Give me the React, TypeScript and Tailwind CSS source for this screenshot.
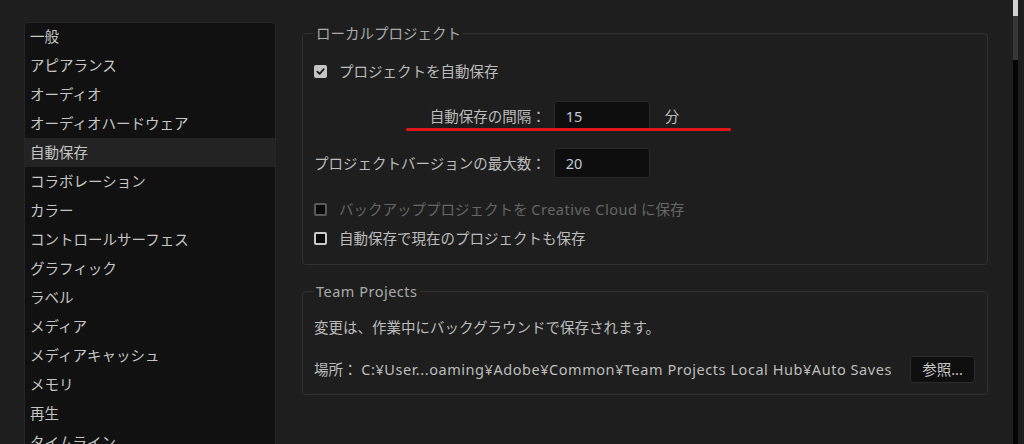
import React from "react";

const items = [
  "一般",
  "アピアランス",
  "オーディオ",
  "オーディオハードウェア",
  "自動保存",
  "コラボレーション",
  "カラー",
  "コントロールサーフェス",
  "グラフィック",
  "ラベル",
  "メディア",
  "メディアキャッシュ",
  "メモリ",
  "再生",
  "タイムライン",
];

function CheckBox({ checked, disabled }: { checked?: boolean; disabled?: boolean }) {
  if (checked) {
    return (
      <span className="w-[13px] h-[13px] rounded-[2px] bg-[#c4c4c4] flex items-center justify-center shrink-0">
        <svg width="9" height="9" viewBox="0 0 10 10">
          <path d="M1.5 5.2 L4 7.6 L8.6 2.4" fill="none" stroke="#161616" strokeWidth="1.9" strokeLinecap="round" strokeLinejoin="round" />
        </svg>
      </span>
    );
  }
  return (
    <span
      className={
        disabled
          ? "w-[13px] h-[13px] rounded-[2px] border-2 border-[#5a5a5a] bg-[#0a0a0a] shrink-0"
          : "w-[13px] h-[13px] rounded-[2px] border-2 border-[#cacaca] bg-[#0a0a0a] shrink-0"
      }
    />
  );
}

export default function App() {
  return (
    <div
      className="relative w-[1024px] h-[444px] overflow-hidden bg-[#1e1e1e] flex items-start text-[14.5px] text-[#bdbdbd]"
      style={{ fontFamily: '"Noto Sans", "Noto Sans CJK JP", sans-serif' }}
    >
      {/* left list */}
      <div className="ml-[24px] mt-[22px] w-[252px] h-[460px] bg-[#111111] border border-[#262626] rounded-[4px] shrink-0 overflow-hidden">
        <div className="-mt-px">
          {items.map((it) => (
            <div
              key={it}
              className={
                "h-[29px] flex items-center pl-[5px] leading-none text-[#c6c6c6] " +
                (it === "自動保存" ? "bg-[#232323]" : "")
              }
            >
              {it}
            </div>
          ))}
        </div>
      </div>

      {/* right column */}
      <div className="ml-[26px] w-[686px] shrink-0 pt-[25px] flex flex-col">
        <fieldset className="border border-[#303030] rounded-[4px] pl-[11px] pr-[12px] pb-[15px]">
          <legend className="px-[2px] leading-[16px] text-[#ababab]">ローカルプロジェクト</legend>
          <div className="pt-[19px] flex flex-col">
            <div className="h-[22px] flex items-center gap-[12px]">
              <CheckBox checked />
              <span className="leading-none">プロジェクトを自動保存</span>
            </div>
            <div className="mt-[19px] grid grid-cols-[max-content_96px_max-content] gap-x-[8px] gap-y-[17px] items-center">
              <span className="justify-self-end leading-none">自動保存の間隔：</span>
              <div className="h-[30px] rounded-[3px] bg-[#0e0e0e] border border-[#2a2a2a] flex items-center pl-[11px] text-[#c3cadb] leading-none">
                15
              </div>
              <span className="ml-[7px] leading-none">分</span>
              <span className="justify-self-end leading-none">プロジェクトバージョンの最大数：</span>
              <div className="h-[30px] rounded-[3px] bg-[#0e0e0e] border border-[#2a2a2a] flex items-center pl-[11px] text-[#c3cadb] leading-none">
                20
              </div>
              <span />
            </div>
            <div className="mt-[20px] h-[22px] flex items-center gap-[12px] text-[#666666]">
              <CheckBox disabled />
              <span className="leading-none">
                バックアッププロジェクトを <span className="tracking-[0.5px]">Creative Cloud</span> に保存
              </span>
            </div>
            <div className="mt-[7px] h-[22px] flex items-center gap-[12px]">
              <CheckBox />
              <span className="leading-none">自動保存で現在のプロジェクトも保存</span>
            </div>
          </div>
        </fieldset>

        <fieldset className="mt-[18px] border border-[#303030] rounded-[4px] pl-[11px] pr-[12px] pb-[11px]">
          <legend className="px-[2px] leading-[16px] text-[#ababab] tracking-[0.5px]">Team Projects</legend>
          <div className="pt-[17px] flex flex-col">
            <div className="h-[22px] flex items-center leading-none">変更は、作業中にバックグラウンドで保存されます。</div>
            <div className="mt-[18px] h-[27px] flex items-center">
              <span className="leading-none">
                場所：&nbsp;
                <span className="tracking-[0.55px]">C:¥User...oaming¥Adobe¥Common¥Team Projects Local Hub¥Auto Saves</span>
              </span>
              <button className="ml-auto w-[65px] h-[27px] rounded-[3px] bg-[#0f0f0f] border border-[#2c2c2c] text-[#c6c6c6] leading-none flex items-center justify-center">
                参照...
              </button>
            </div>
          </div>
        </fieldset>
      </div>

      {/* red underline annotation */}
      <div className="absolute left-[406px] top-[128px] w-[325px] h-[3px] rounded-full bg-[#e11616]" />

      {/* scrollbar */}
      <div className="absolute left-[1013px] top-0 w-[5px] h-[444px] flex flex-col">
        <div className="h-[16px] bg-[#d2d2d2]" />
        <div className="h-[44px] bg-[#363636]" />
        <div className="flex-1 bg-[#050505]" />
      </div>
    </div>
  );
}
